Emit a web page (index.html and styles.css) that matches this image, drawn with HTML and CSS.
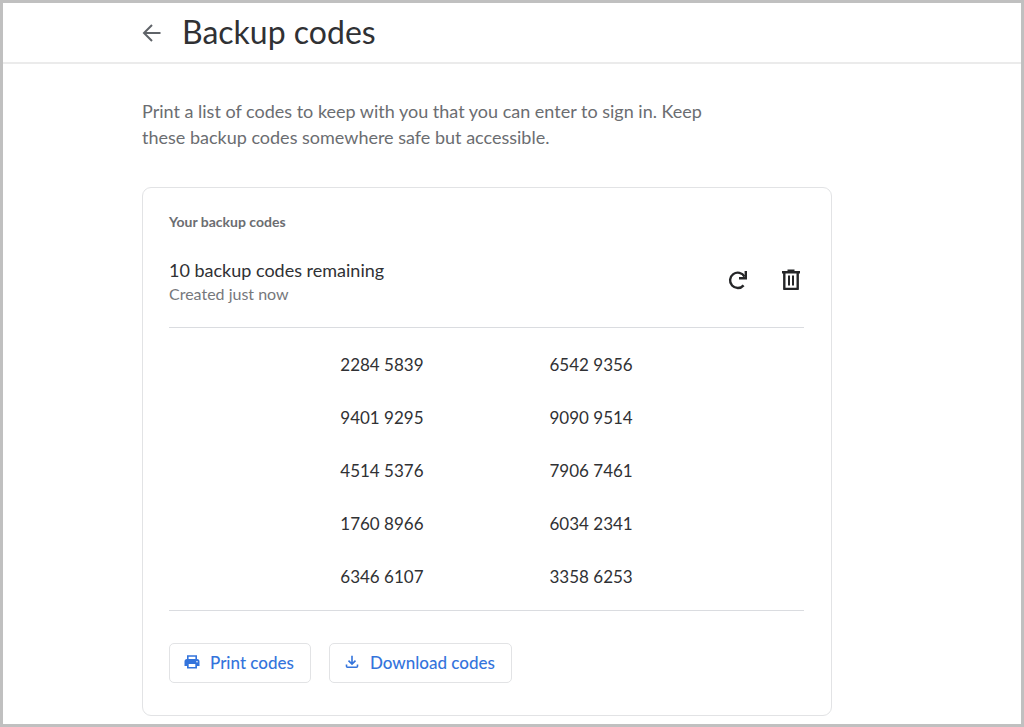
FILE: index.html
```html
<!DOCTYPE html>
<html lang="en">
<head>
<meta charset="utf-8">
<meta name="viewport" content="width=device-width, initial-scale=1">
<title>Backup codes</title>
<link rel="stylesheet" href="styles.css">
</head>
<body class="page">
<header class="topbar">
  <a class="back" href="#" aria-label="Back">
    <svg width="20" height="20" viewBox="0 0 20 20" fill="none" stroke="currentColor" stroke-width="2"><path d="M18.500 10H2.500M10 2L2 10l8 8"/></svg>
  </a>
  <h1 class="title">Backup codes</h1>
</header>
<main class="content">
  <p class="intro">Print a list of codes to keep with you that you can enter to sign in. Keep these backup codes somewhere safe but accessible.</p>
  <section class="card">
    <h2 class="card-title">Your backup codes</h2>
    <div class="summary">
      <div>
        <p class="remaining">10 backup codes remaining</p>
        <p class="created">Created just now</p>
      </div>
      <div class="tools">
        <button class="tool" type="button" aria-label="Get new codes">
          <svg width="20" height="20" viewBox="0 0 20 20" fill="none" stroke="currentColor" stroke-width="2.400"><path d="M15.600 15.400A7.700 7.700 0 1 1 16.500 6.600"/><path d="M17.800 1v7.200H11"/></svg>
        </button>
        <button class="tool" type="button" aria-label="Delete codes">
          <svg width="20" height="22" viewBox="0 0 20 22" fill="none" stroke="currentColor" stroke-width="2.400"><path d="M1 3.200h18M6.500 1.700h7M3.300 3.500v16.400h13.400V3.500" stroke-linejoin="round"/><path d="M8 6.500v10M12 6.500v10" stroke-width="2"/></svg>
        </button>
      </div>
    </div>
    <table class="codes" aria-label="Backup codes">
      <tbody>
        <tr><td>2284 5839</td><td>6542 9356</td></tr>
        <tr><td>9401 9295</td><td>9090 9514</td></tr>
        <tr><td>4514 5376</td><td>7906 7461</td></tr>
        <tr><td>1760 8966</td><td>6034 2341</td></tr>
        <tr><td>6346 6107</td><td>3358 6253</td></tr>
      </tbody>
    </table>
    <div class="actions">
      <button class="action" type="button">
        <svg width="16" height="16" viewBox="0 0 16 16" fill="currentColor"><path fill-rule="evenodd" d="M3 1.200h10v3.800a2.500 2.500 0 0 1 2.500 2.500V12H13v2.500H3V12H.5V7.500A2.500 2.500 0 0 1 3 5zM4.600 2.700v2.300h6.800V2.700zM4.700 10v3h6.600v-3zM13 6.900a.8.8 0 1 0 0 1.600.8.8 0 0 0 0-1.600z"/></svg>
        Print codes
      </button>
      <button class="action" type="button">
        <svg width="16" height="16" viewBox="0 0 16 16" fill="none" stroke="currentColor" stroke-width="1.600"><path d="M8 1.800v8M4.500 6.600L8 10.100l3.500-3.500M2.500 10.500V12.300Q2.500 13.300 3.500 13.300H12.500Q13.500 13.300 13.500 12.300V10.500"/></svg>
        Download codes
      </button>
    </div>
  </section>
</main>
</body>
</html>
```
FILE: styles.css
```css
* {
  box-sizing: border-box;
}

.page {
  margin: 0;
  min-height: 100vh;
  border: 3px solid #c0c0c0;
  background: #fff;
  color: #303134;
  font-family: "Lato", "Liberation Sans", sans-serif;
}

h1, h2, p {
  margin: 0;
  font-weight: 400;
}

.topbar {
  display: flex;
  align-items: center;
  gap: 20px;
  height: 61px;
  padding-left: 139px;
  border-bottom: 2px solid #ebebeb;
}

.back {
  display: flex;
  color: #5f6368;
}

.title {
  padding-bottom: 2px;
  font-size: 32px;
  line-height: 40px;
}

.content {
  max-width: 829px;
  padding: 34px 0 8px 139px;
}

.intro {
  max-width: 580px;
  color: #6b6d71;
  font-size: 18px;
  line-height: 26px;
}

.card {
  margin-top: 37px;
  padding: 24px 27px 32px 26px;
  border: 1px solid #e2e3e5;
  border-radius: 9px;
}

.card-title {
  color: #6b6d71;
  font-size: 14px;
  font-weight: 700;
  line-height: 20px;
}

.summary {
  display: flex;
  align-items: flex-start;
  justify-content: space-between;
  padding: 26px 3px 21px 0;
}

.remaining {
  font-size: 18px;
  line-height: 24px;
}

.created {
  color: #76787c;
  font-size: 16px;
  line-height: 24px;
}

.tools {
  display: flex;
  gap: 33px;
  padding-top: 11px;
}

.tool {
  display: flex;
  align-items: center;
  padding: 0;
  border: 0;
  background: none;
  color: #252628;
}

.codes {
  width: 100%;
  padding: 10px 0 7px;
  border-top: 1px solid #dadce0;
  border-bottom: 1px solid #dadce0;
  border-spacing: 0;
  font-size: 17px;
}

.codes td {
  width: 50%;
  height: 53px;
  padding: 0 63px;
}

.codes td:first-child {
  text-align: right;
}

.actions {
  display: flex;
  gap: 18px;
  padding-top: 32px;
}

.action {
  display: flex;
  align-items: center;
  gap: 10px;
  height: 40px;
  padding: 0 16px 2px 14px;
  border: 1px solid #e2e3e5;
  border-radius: 5px;
  background: #fff;
  color: #3474dc;
  font-family: inherit;
  font-size: 17px;
  font-weight: 500;
}
```
